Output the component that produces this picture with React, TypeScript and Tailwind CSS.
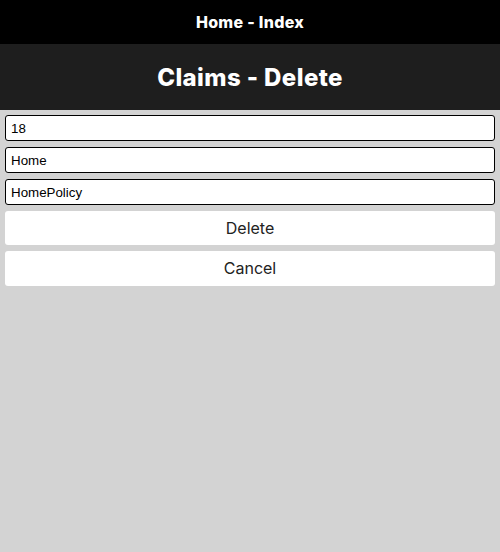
import React from "react";

export default function App() {
  return (
    <div className="min-h-[552px] bg-[#d3d3d3]">
      <div className="h-[44px] bg-black flex items-center justify-center">
        <span className="text-white font-extrabold text-[16px] tracking-[0.3px] font-['Inter',sans-serif]">Home - Index</span>
      </div>
      <div className="h-[66px] bg-[#1e1e1e] flex items-center justify-center pt-[1px]">
        <h1 className="text-white font-extrabold text-[24px] tracking-[0.4px] font-['Inter',sans-serif]">Claims - Delete</h1>
      </div>
      <div className="flex flex-col gap-[6px] px-[5px] pt-[5px]">
        {["18", "Home", "HomePolicy"].map((v) => (
          <input
            key={v}
            readOnly
            value={v}
            className="h-[26px] w-full bg-white border border-black rounded-[3px] px-[5px] text-[13.33px] text-black outline-none font-['Liberation_Sans',Arial,sans-serif]"
          />
        ))}
        <button className="h-[34px] w-full bg-white rounded-[3px] text-[16px] text-[#222] font-['Inter',sans-serif]">Delete</button>
        <button className="h-[35px] w-full bg-white rounded-[3px] text-[16px] text-[#222] font-['Inter',sans-serif] pb-[1px]">Cancel</button>
      </div>
    </div>
  );
}
